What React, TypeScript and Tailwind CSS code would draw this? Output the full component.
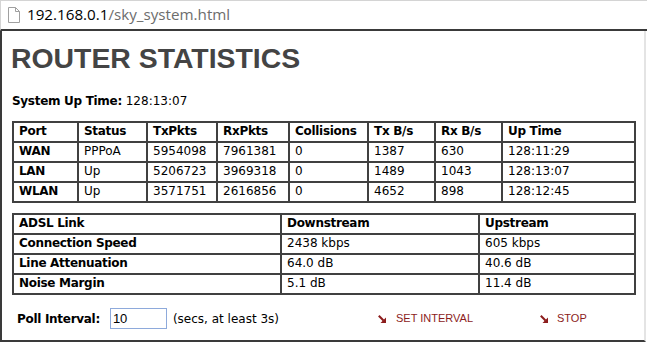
import React from 'react';

const ports = [
    ['WAN', 'PPPoA', '5954098', '7961381', '0', '1387', '630', '128:11:29'],
    ['LAN', 'Up', '5206723', '3969318', '0', '1489', '1043', '128:13:07'],
    ['WLAN', 'Up', '3571751', '2616856', '0', '4652', '898', '128:12:45'],
];

const portHeaders = ['Port', 'Status', 'TxPkts', 'RxPkts', 'Collisions', 'Tx B/s', 'Rx B/s', 'Up Time'];

const adsl = [
    ['Connection Speed', '2438 kbps', '605 kbps'],
    ['Line Attenuation', '64.0 dB', '40.6 dB'],
    ['Noise Margin', '5.1 dB', '11.4 dB'],
];

const cell = 'h-[20px] border-r-2 border-b-2 border-[#404040] pl-[5px] leading-[17px] whitespace-nowrap';
const bold = 'font-bold tracking-[-0.3px]';

const PageIcon = () => (
    <svg width="12" height="16" viewBox="0 0 12 16" className="shrink-0">
        <path d="M0.5 0.5 H7.5 L11.5 4.5 V15.5 H0.5 Z" fill="#fff" stroke="#a0a0a0" />
        <path d="M7.5 0.5 V4.5 H11.5" fill="none" stroke="#a0a0a0" />
    </svg>
);

const Arrow = () => (
    <svg width="8" height="8" viewBox="0 0 8 8" className="shrink-0">
        <path d="M0.8 0.8 L5.5 5.5" stroke="#8c1c1c" strokeWidth="2" />
        <polygon points="8,2.5 8,8 2.5,8" fill="#8c1c1c" />
    </svg>
);

const App: React.FC = () => {
    return (
        <div className="w-[647px] h-[342px] bg-white overflow-hidden flex flex-col">
            {/* address bar */}
            <div className="h-[31px] border-t border-l border-[#d4d4d4] border-b-2 border-b-[#3a3a3a] flex items-center pl-[7px] gap-[7px]">
                <PageIcon />
                <span className="text-[15.2px] font-['Open_Sans',sans-serif] leading-none">
                    <span className="text-black">192.168.0.1</span>
                    <span className="text-[#6d6d6d]">/sky_system.html</span>
                </span>
            </div>

            {/* page */}
            <div className="flex-1 w-[646px] border-l-2 border-b-2 border-[#3a3a3a] border-r-2 border-r-[#e4e4e4] pl-[10px] font-['DejaVu_Sans',Verdana,sans-serif] text-[12px] text-black">
                <h1 className="mt-[11px] -ml-[1px] text-[28.4px] leading-[32px] font-bold text-[#444] font-['Liberation_Sans',Arial,sans-serif]">
                    ROUTER STATISTICS
                </h1>

                <div className="mt-[19px] leading-[16px]">
                    <span className={bold}>System Up Time:</span> 128:13:07
                </div>

                <div className="mt-[12px] w-[624px] grid grid-cols-[65px_69px_70px_72px_79px_67px_67px_133px] border-l-2 border-t-2 border-[#404040]">
                    {portHeaders.map((h) => (
                        <div key={h} className={`${cell} ${bold}`}>{h}</div>
                    ))}
                    {ports.map((row) =>
                        row.map((v, i) => (
                            <div key={row[0] + i} className={`${cell} ${i === 0 ? bold : ''}`}>{v}</div>
                        ))
                    )}
                </div>

                <div className="mt-[10px] w-[624px] grid grid-cols-[268px_198px_156px] border-l-2 border-t-2 border-[#404040]">
                    <div className={`${cell} ${bold}`}>ADSL Link</div>
                    <div className={`${cell} ${bold}`}>Downstream</div>
                    <div className={`${cell} ${bold}`}>Upstream</div>
                    {adsl.map((row) =>
                        row.map((v, i) => (
                            <div key={row[0] + i} className={`${cell} ${i === 0 ? bold : ''}`}>{v}</div>
                        ))
                    )}
                </div>

                <div className="mt-[13px] h-[21px] flex items-center">
                    <div className="w-[366px] flex items-center pl-[5px]">
                        <span className={bold}>Poll Interval:</span>
                        <input
                            readOnly
                            value="10"
                            className="ml-[10px] w-[57px] h-[21px] border border-[#8eaadb] px-[2px] text-[13px] font-['Liberation_Sans',Arial,sans-serif] outline-none"
                        />
                        <span className="ml-[6px]">(secs, at least 3s)</span>
                    </div>
                    <div className="w-[162px] flex items-center gap-[10px] text-[11px] text-[#8c1c1c] font-['Liberation_Sans',Arial,sans-serif]">
                        <Arrow />
                        <span>SET INTERVAL</span>
                    </div>
                    <div className="flex items-center gap-[9px] text-[11px] text-[#8c1c1c] font-['Liberation_Sans',Arial,sans-serif]">
                        <Arrow />
                        <span>STOP</span>
                    </div>
                </div>
            </div>
        </div>
    );
};

export default App;
